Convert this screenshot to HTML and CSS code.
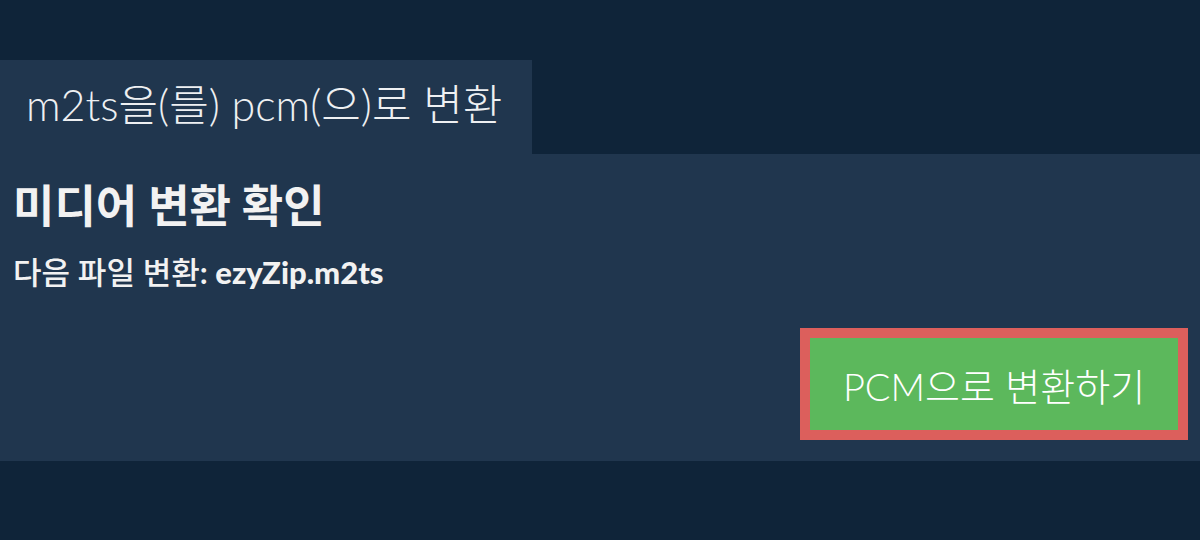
FILE: index.html
```html
<!DOCTYPE html>
<html lang="ko">

<head>
  <meta charset="UTF-8">
  <meta name="viewport" content="width=device-width, initial-scale=1.0">
  <title>m2ts을(를) pcm(으)로 변환</title>
  <link rel="stylesheet" href="styles.css">
</head>

<body>
  <div class="tab">m2ts을(를) pcm(으)로 변환</div>

  <div class="panel">
    <h2 class="panel-title">미디어 변환 확인</h2>
    <p class="panel-file"><span class="label">다음 파일 변환</span>: <b>ezyZip.m2ts</b></p>

    <div class="actions">
      <button class="convert-btn" type="button">PCM으로 변환하기</button>
    </div>
  </div>
</body>

</html>
```

FILE: styles.css
```css
* {
  margin: 0;
  padding: 0;
  box-sizing: border-box;
}

body {
  font-family: 'Lato', 'Noto Sans CJK KR', sans-serif;
  background-color: #0f2439;
  color: #f2f2f2;
  padding-top: 60px;
}

.tab {
  display: inline-block;
  width: 532px;
  height: 94px;
  padding: 0 0 0 26px;
  line-height: 90px;
  background-color: #20364e;
  font-size: 43px;
  font-weight: 300;
  color: #eef0f2;
}

.panel {
  background-color: #20364e;
  padding: 23px 12px 0 13px;
  height: 307px;
}

.panel-title {
  font-size: 45px;
  font-weight: 700;
  line-height: 58px;
}

.panel-file {
  font-size: 31px;
  font-weight: 700;
  line-height: 36px;
  margin-top: 19px;
}

.panel-file .label {
  font-weight: 500;
}

.panel-file b {
  font-weight: 900;
}

.actions {
  display: flex;
  justify-content: flex-end;
  margin-top: 38px;
}

.convert-btn {
  font-family: inherit;
  font-size: 38px;
  font-weight: 300;
  color: #fff;
  background-color: #5cb85c;
  border: 10px solid #dc5f5c;
  width: 388px;
  height: 112px;
  cursor: pointer;
}
```
